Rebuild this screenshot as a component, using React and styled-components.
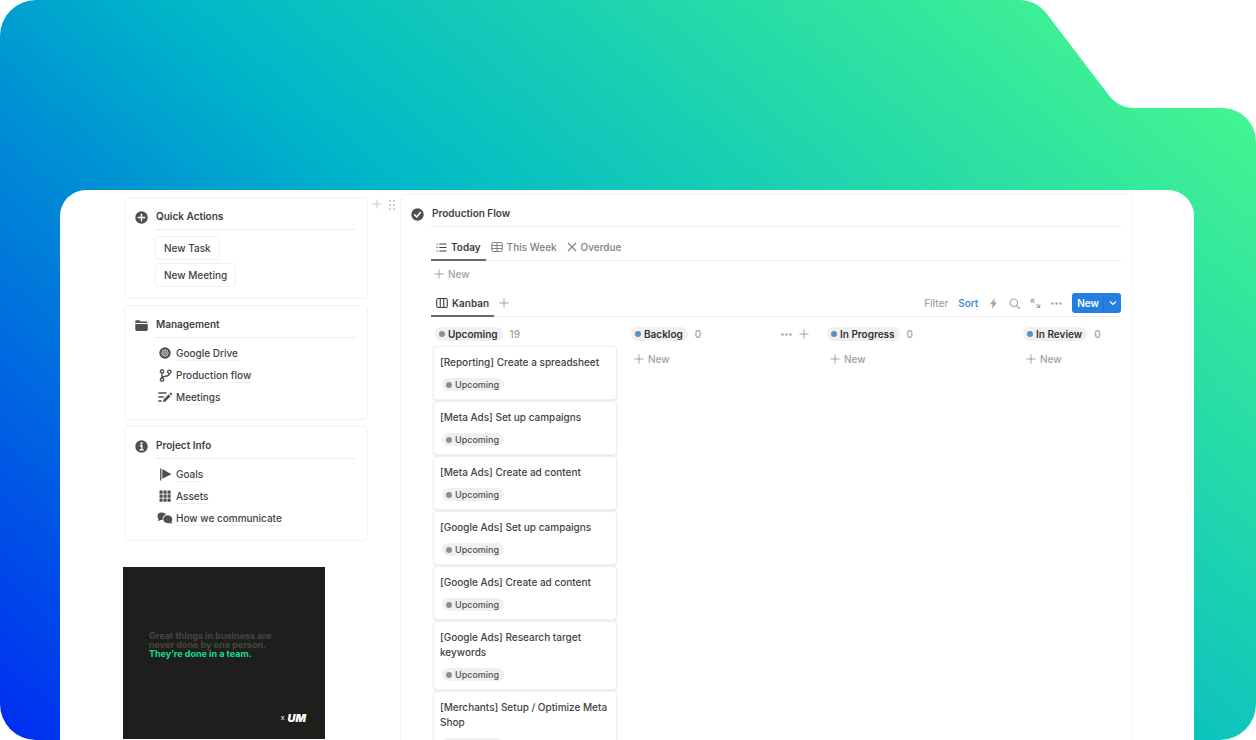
import React from "react";
import styled, { createGlobalStyle } from "styled-components";

const GlobalStyle = createGlobalStyle`
  * { box-sizing: border-box; }
  body {
    margin: 0;
    background: #fff;
    color: #43423f;
    font: 500 10px/15px Inter, "Liberation Sans", sans-serif;
  }
  button {
    margin: 0;
    padding: 0;
    border: 0;
    background: none;
    color: inherit;
    font: inherit;
    white-space: nowrap;
    cursor: pointer;
  }
  h2, h3, p, ul { margin: 0; padding: 0; font: inherit; list-style: none; }
  a { color: inherit; text-decoration: none; }
  svg { display: block; flex: none; }
`;

/* ---------- icons ---------- */

const Svg = ({ size = 12, box = 24, children, ...rest }) => (
  <svg width={size} height={size} viewBox={`0 0 ${box} ${box}`} fill="none" aria-hidden="true" {...rest}>
    {children}
  </svg>
);

const PlusIcon = ({ size = 10 }) => (
  <Svg size={size} box={10} stroke="currentColor">
    <path d="M5 0.5v9M0.5 5h9" />
  </Svg>
);
const PlusCircleIcon = () => (
  <Svg size={13}>
    <circle cx="12" cy="12" r="11.5" fill="currentColor" />
    <path d="M12 6v12M6 12h12" stroke="#fff" strokeWidth="2.8" strokeLinecap="round" />
  </Svg>
);
const InfoIcon = () => (
  <Svg size={13}>
    <circle cx="12" cy="12" r="11.5" fill="currentColor" />
    <circle cx="12" cy="6.4" r="2.1" fill="#fff" />
    <path d="M9 10.6h3.6v7.2M8.4 18h7.4" stroke="#fff" strokeWidth="2.6" />
  </Svg>
);
const CheckCircleIcon = () => (
  <Svg size={13}>
    <circle cx="12" cy="12" r="11.5" fill="currentColor" />
    <path d="M6.6 12.6l3.8 3.8 7-8.2" stroke="#fff" strokeWidth="2.8" strokeLinecap="round" strokeLinejoin="round" />
  </Svg>
);
const FolderIcon = () => (
  <Svg size={13} fill="currentColor">
    <path d="M0.5 4.5Q0.5 2.5 2.500 2.500H8l2.500 2.200H21.500Q23 4.700 23 6.500V7.200H0.500Z" />
    <path d="M0.5 9H23.500V19.500Q23.500 22 21 22H3Q0.500 22 0.500 19.500Z" />
  </Svg>
);
const DiscIcon = () => (
  <Svg size={12}>
    <circle cx="12" cy="12" r="11.500" fill="currentColor" />
    <circle cx="12" cy="12" r="6.300" stroke="#fff" strokeWidth="1.500" />
    <circle cx="12" cy="12" r="2.800" stroke="#fff" strokeWidth="1.300" />
  </Svg>
);
const BranchIcon = () => (
  <Svg size={13} stroke="currentColor" strokeWidth="2.600">
    <circle cx="5.500" cy="4.500" r="3" />
    <circle cx="5.500" cy="19.500" r="3" />
    <circle cx="19" cy="5" r="3" />
    <path d="M5.500 7.500v9M19 8c0 5-3 5-7 5.400-3 .3-5.500.8-6.500 3" />
  </Svg>
);
const NotesIcon = () => (
  <Svg size={14} fill="currentColor">
    <path d="M0.500 4h14v2.400H0.500zM0.500 10.800h9.500v2.400H0.500zM0.500 17.600h6v2.400H0.500z" />
    <path d="M8.500 20.500l1-4.300L18.200 7.400l3.300 3.300-8.700 8.800zM19.400 6.200l1.600-1.600q.8-.8 1.600 0l1.600 1.600q.8.800 0 1.600l-1.500 1.600z" />
  </Svg>
);
const FlagIcon = () => (
  <Svg size={13} fill="currentColor">
    <path d="M2 1h2.400v22H2zM6 2l17 9.500L6 20z" />
  </Svg>
);
const GridIcon = () => (
  <Svg size={12} fill="currentColor">
    {[1, 9, 17].map((y) => [1, 9, 17].map((x) => <rect key={`${x}-${y}`} x={x} y={y} width="6.400" height="6.400" rx="0.600" />))}
  </Svg>
);
const ChatIcon = () => (
  <svg width="16" height="12" viewBox="0 0 32 24" fill="currentColor" aria-hidden="true">
    <path d="M9 1C4 1 1 4.300 1 8.500c0 2.300.8 4 2 5.300L1.500 18.500l6-2.700h3.500C11 9 15 5.500 18 5.200 16.500 2.600 13.500 1 9 1z" />
    <path d="M21.500 6.500c-5.400 0-9 3.500-9 8s3.600 7.800 9 7.800c1.300 0 2.300-.2 3.300-.5l5.700 1.700-1.600-4.300c1-1.300 1.600-2.900 1.600-4.700 0-4.500-3.600-8-9-8z" />
  </svg>
);
const DragIcon = () => (
  <Svg size={12} box={12} fill="currentColor">
    {[2, 6, 10].map((y) => [4, 8].map((x) => <circle key={`${x}-${y}`} cx={x} cy={y} r="1.100" />))}
  </Svg>
);
const ListIcon = () => (
  <Svg size={11} box={22} stroke="currentColor" strokeWidth="2">
    <path d="M1 4h2.400M1 11h2.400M1 18h2.400M6.500 4H21M6.500 11H21M6.500 18H21" />
  </Svg>
);
const TableIcon = () => (
  <Svg size={12} stroke="currentColor" strokeWidth="2">
    <rect x="1.500" y="3" width="21" height="18" rx="3" />
    <path d="M1.500 9h21M1.500 15h21M12 3v18" />
  </Svg>
);
const CrossIcon = () => (
  <Svg size={10} box={20} stroke="currentColor" strokeWidth="2.200">
    <path d="M2 2l16 16M18 2L2 18" />
  </Svg>
);
const BoardIcon = () => (
  <Svg size={12} stroke="currentColor" strokeWidth="2.200">
    <rect x="1.500" y="3" width="21" height="18" rx="3" />
    <path d="M8.500 3v18M15.500 3v18" />
  </Svg>
);
const BoltIcon = () => (
  <Svg size={11} fill="currentColor">
    <path d="M15 0.500L4 13.500h6.200L8.500 23.500 20 10h-6.500z" />
  </Svg>
);
const SearchIcon = () => (
  <Svg size={11} box={22} stroke="currentColor" strokeWidth="2.200">
    <circle cx="9.500" cy="9.500" r="7.500" />
    <path d="M15 15l6 6" strokeLinecap="round" />
  </Svg>
);
const ExpandIcon = () => (
  <Svg size={11} box={22} stroke="currentColor" strokeWidth="2.200">
    <path d="M2.500 9.500V3H9M2.500 3L9 9.500M19.500 12.500V19H13M19.500 19L13 12.500" />
  </Svg>
);
const DotsIcon = () => (
  <Svg size={11} box={11} fill="currentColor">
    <circle cx="1.500" cy="5.500" r="1.200" />
    <circle cx="5.500" cy="5.500" r="1.200" />
    <circle cx="9.500" cy="5.500" r="1.200" />
  </Svg>
);
const ChevronIcon = () => (
  <Svg size={8} box={8} stroke="currentColor" strokeWidth="1.200">
    <path d="M1 2.500l3 3 3-3" />
  </Svg>
);

/* ---------- frame ---------- */

const Frame = styled.div`
  position: relative;
  display: flex;
  height: 100vh;
  padding: 190px 62px 0 60px;
  overflow: hidden;
  border-radius: 36px 0 36px 36px;
  background: linear-gradient(41deg, #002cf2 0%, #00b8c8 49%, #46f78e 95%);
`;
const Notch = styled.svg`
  position: absolute;
  top: 0;
  right: 0;
`;
const Sheet = styled.main`
  display: flex;
  flex: 1;
  min-width: 0;
  padding: 4px 61px 0 63px;
  overflow: hidden;
  border-radius: 26px 26px 0 0;
  background: #fff;
`;

/* ---------- sidebar ---------- */

const Sidebar = styled.aside`
  display: flex;
  flex: none;
  flex-direction: column;
  gap: 6px;
  width: 245px;
  padding: 3px 0 0 1px;
`;
const Card = styled.section`
  flex: none;
  padding: 9px 11px 11px 10px;
  border: 1px solid #f3f3f2;
  border-radius: 4px;
`;
const CardHead = styled.header`
  display: grid;
  grid-template-columns: 13px 1fr;
  column-gap: 7px;
  align-items: center;
  color: #504f4c;
  & > svg { margin-bottom: 3px; }
`;
const CardTitle = styled.h2`
  height: 23px;
  padding: 2px 0 0 1px;
  border-bottom: 1px solid #ededec;
  color: #3f3e3b;
  font-weight: 600;
`;
const Actions = styled.div`
  display: flex;
  flex-direction: column;
  align-items: flex-start;
  gap: 3px;
  padding: 6px 0 0 20px;
`;
const ActionButton = styled.button`
  height: 24px;
  padding: 0 8px;
  border: 1px solid #f1f1f0;
  border-radius: 3px;
`;
const LinkList = styled.ul`
  padding: 4px 0 0 22px;
`;
const LinkRow = styled.li`
  display: grid;
  grid-template-columns: 16px auto;
  align-items: center;
  justify-content: start;
  justify-items: center;
  column-gap: 3px;
  height: 22px;
  color: #504f4c;
`;
const PageLink = styled.a`
  border-bottom: 1px solid #f0f0ef;
  color: #43423f;
  line-height: 14px;
`;
const Quote = styled.figure`
  display: flex;
  flex: none;
  flex-direction: column;
  justify-content: space-between;
  width: 202px;
  height: 172px;
  margin: 20px 0 0 -1px;
  padding: 64px 19px 14px 26px;
  background: #1e1e1c;
  color: #464644;
  font: 700 9px/9px Inter, sans-serif;
  white-space: nowrap;
`;
const Highlight = styled.strong`
  display: block;
  color: #14dc8c;
  font-weight: 700;
`;
const Brand = styled.figcaption`
  display: flex;
  align-items: center;
  justify-content: flex-end;
  gap: 3px;
  color: #fff;
  font: 400 7px/14px Inter, sans-serif;
`;
const BrandName = styled.span`
  font: italic 900 11px/14px Inter, sans-serif;
`;
const Gutter = styled.div`
  display: flex;
  flex: none;
  align-items: flex-start;
  justify-content: space-between;
  width: 32px;
  padding: 5px 2px 0 4px;
  color: #c9c8c5;
`;

/* ---------- production flow ---------- */

const Flow = styled.section`
  flex: 1;
  min-width: 0;
  padding: 9px 11px 0 10px;
  border: 1px solid #f4f4f3;
  border-bottom: 0;
  border-radius: 4px 4px 0 0;
`;
const FlowBody = styled.div`
  padding-left: 20px;
`;
const TabBar = styled.div`
  display: flex;
  align-items: flex-end;
  justify-content: space-between;
  height: ${(p) => p.$height}px;
  border-bottom: 1px solid #ececeb;
`;
const Tabs = styled.div`
  display: flex;
  align-items: center;
`;
const Tab = styled.button`
  display: flex;
  align-items: center;
  gap: 4px;
  height: 28px;
  margin-bottom: -1px;
  padding: 2px 5px 0;
  border-bottom: 2px solid ${(p) => (p.$active ? "#6b6966" : "transparent")};
  color: ${(p) => (p.$active ? "#3f3e3b" : p.$faint ? "#a3a29e" : "#82817d")};
  font-weight: ${(p) => (p.$active ? 600 : 500)};
`;
const QuietButton = styled.button`
  display: flex;
  align-items: center;
  gap: 4px;
  color: ${(p) => (p.$accent ? "#2483e2" : "#a3a29e")};
`;
const NewRow = styled.div`
  display: flex;
  align-items: center;
  height: 26px;
  padding-left: 3px;
`;
const Tools = styled.div`
  display: flex;
  align-items: center;
  gap: 10px;
  height: 20px;
  margin-bottom: 3px;
`;
const SplitButton = styled.div`
  display: flex;
  height: 20px;
  overflow: hidden;
  border-radius: 3px;
  background: #2380e0;
  color: #fff;
  font-weight: 600;
`;
const SplitPart = styled.button`
  display: flex;
  align-items: center;
  padding: 0 4px 0 5px;
  & + & { border-left: 1px solid #1d72cb; }
`;

const Board = styled.div`
  display: flex;
  gap: 12px;
  padding: 7px 0 0 2px;
  overflow: hidden;
`;
const Column = styled.section`
  flex: 0 0 184px;
  padding: 0 1px;
`;
const ColumnHead = styled.header`
  display: flex;
  align-items: center;
  gap: 7px;
  height: 20px;
  padding: 0 3px 0 1px;
  color: #a3a29e;
`;
const Spacer = styled.span`
  flex: 1;
`;
const Pill = styled.span`
  display: inline-flex;
  align-items: center;
  gap: 3px;
  height: ${(p) => (p.$small ? 13 : 14)}px;
  padding: 0 5px 0 4px;
  border-radius: 7px;
  background: #f0f0ef;
  color: ${(p) => (p.$small ? "#504f4c" : "#33322f")};
  font-size: ${(p) => (p.$small ? 9 : 10)}px;
  font-weight: ${(p) => (p.$small ? 500 : 600)};
  line-height: 13px;
  white-space: nowrap;
  &::before {
    content: "";
    width: 6px;
    height: 6px;
    border-radius: 50%;
    background: ${(p) => (p.$blue ? "#5593bf" : "#8f8e8b")};
  }
`;
const ColumnNew = styled.div`
  display: flex;
  align-items: center;
  height: 30px;
  padding-left: 4px;
`;
const TaskList = styled.ul`
  display: flex;
  flex-direction: column;
  gap: 3px;
  padding: 3px 0;
`;
const Task = styled.li`
  padding: 8px 6px;
  border-radius: 3px;
  box-shadow: 0 0 0 1px #efefee, 0 1px 2px 1px #e8e8e7;
`;
const TaskTitle = styled.h3`
  margin-bottom: 8px;
`;
const TaskStatus = styled.div`
  display: flex;
  padding-left: 2px;
`;

const sections = [
  {
    title: "Management",
    icon: <FolderIcon />,
    links: [
      ["Google Drive", <DiscIcon />],
      ["Production flow", <BranchIcon />],
      ["Meetings", <NotesIcon />],
    ],
  },
  {
    title: "Project Info",
    icon: <InfoIcon />,
    links: [
      ["Goals", <FlagIcon />],
      ["Assets", <GridIcon />],
      ["How we communicate", <ChatIcon />],
    ],
  },
];

const tasks = [
  "[Reporting] Create a spreadsheet",
  "[Meta Ads] Set up campaigns",
  "[Meta Ads] Create ad content",
  "[Google Ads] Set up campaigns",
  "[Google Ads] Create ad content",
  "[Google Ads] Research target keywords",
  "[Merchants] Setup / Optimize Meta Shop",
];

const columns = [
  { name: "Upcoming", count: 19, tasks },
  { name: "Backlog", count: 0, tools: true },
  { name: "In Progress", count: 0 },
  { name: "In Review", count: 0 },
];

const NewButton = () => (
  <QuietButton type="button">
    <PlusIcon /> New
  </QuietButton>
);

export default function App() {
  return (
    <>
      <GlobalStyle />
      <Frame>
        <Notch width="240" height="145" viewBox="0 0 240 145" fill="#fff" aria-hidden="true">
          <path d="M4 0C14 0 24 5 30.500 13.500L93 95.500C99 103.500 108 108 118 108H206C225 108 240 123 240 142V0Z" />
        </Notch>
        <Sheet>
          <Sidebar>
            <Card>
              <CardHead>
                <PlusCircleIcon />
                <CardTitle>Quick Actions</CardTitle>
              </CardHead>
              <Actions>
                <ActionButton type="button">New Task</ActionButton>
                <ActionButton type="button">New Meeting</ActionButton>
              </Actions>
            </Card>
            {sections.map((s) => (
              <Card key={s.title}>
                <CardHead>
                  {s.icon}
                  <CardTitle>{s.title}</CardTitle>
                </CardHead>
                <LinkList>
                  {s.links.map(([label, icon]) => (
                    <LinkRow key={label}>
                      {icon}
                      <PageLink href="#">{label}</PageLink>
                    </LinkRow>
                  ))}
                </LinkList>
              </Card>
            ))}
            <Quote>
              <p>
                Great things in business are
                <br />
                never done by one person.
                <Highlight>They’re done in a team.</Highlight>
              </p>
              <Brand>
                x <BrandName>UM</BrandName>
              </Brand>
            </Quote>
          </Sidebar>
          <Gutter>
            <button type="button" aria-label="Add block"><PlusIcon /></button>
            <button type="button" aria-label="Drag block"><DragIcon /></button>
          </Gutter>
          <Flow>
            <CardHead>
              <CheckCircleIcon />
              <CardTitle>Production Flow</CardTitle>
            </CardHead>
            <FlowBody>
              <TabBar $height={34}>
                <Tabs>
                  <Tab type="button" $active><ListIcon /> Today</Tab>
                  <Tab type="button"><TableIcon /> This Week</Tab>
                  <Tab type="button"><CrossIcon /> Overdue</Tab>
                </Tabs>
              </TabBar>
              <NewRow><NewButton /></NewRow>
              <TabBar $height={30}>
                <Tabs>
                  <Tab type="button" $active><BoardIcon /> Kanban</Tab>
                  <Tab type="button" $faint aria-label="Add view"><PlusIcon /></Tab>
                </Tabs>
                <Tools>
                  <QuietButton type="button">Filter</QuietButton>
                  <QuietButton type="button" $accent>Sort</QuietButton>
                  <QuietButton type="button" aria-label="Automations"><BoltIcon /></QuietButton>
                  <QuietButton type="button" aria-label="Search"><SearchIcon /></QuietButton>
                  <QuietButton type="button" aria-label="Expand"><ExpandIcon /></QuietButton>
                  <QuietButton type="button" aria-label="More"><DotsIcon /></QuietButton>
                  <SplitButton>
                    <SplitPart type="button">New</SplitPart>
                    <SplitPart type="button" aria-label="New options"><ChevronIcon /></SplitPart>
                  </SplitButton>
                </Tools>
              </TabBar>
              <Board>
                {columns.map((c) => (
                  <Column key={c.name}>
                    <ColumnHead>
                      <Pill $blue={!c.tasks}>{c.name}</Pill>
                      {c.count}
                      {c.tools && (
                        <>
                          <Spacer />
                          <QuietButton type="button" aria-label="Column menu"><DotsIcon /></QuietButton>
                          <QuietButton type="button" aria-label="Add card"><PlusIcon /></QuietButton>
                        </>
                      )}
                    </ColumnHead>
                    {c.tasks ? (
                      <TaskList>
                        {c.tasks.map((t) => (
                          <Task key={t}>
                            <TaskTitle>{t}</TaskTitle>
                            <TaskStatus><Pill $small>Upcoming</Pill></TaskStatus>
                          </Task>
                        ))}
                      </TaskList>
                    ) : (
                      <ColumnNew><NewButton /></ColumnNew>
                    )}
                  </Column>
                ))}
              </Board>
            </FlowBody>
          </Flow>
        </Sheet>
      </Frame>
    </>
  );
}
